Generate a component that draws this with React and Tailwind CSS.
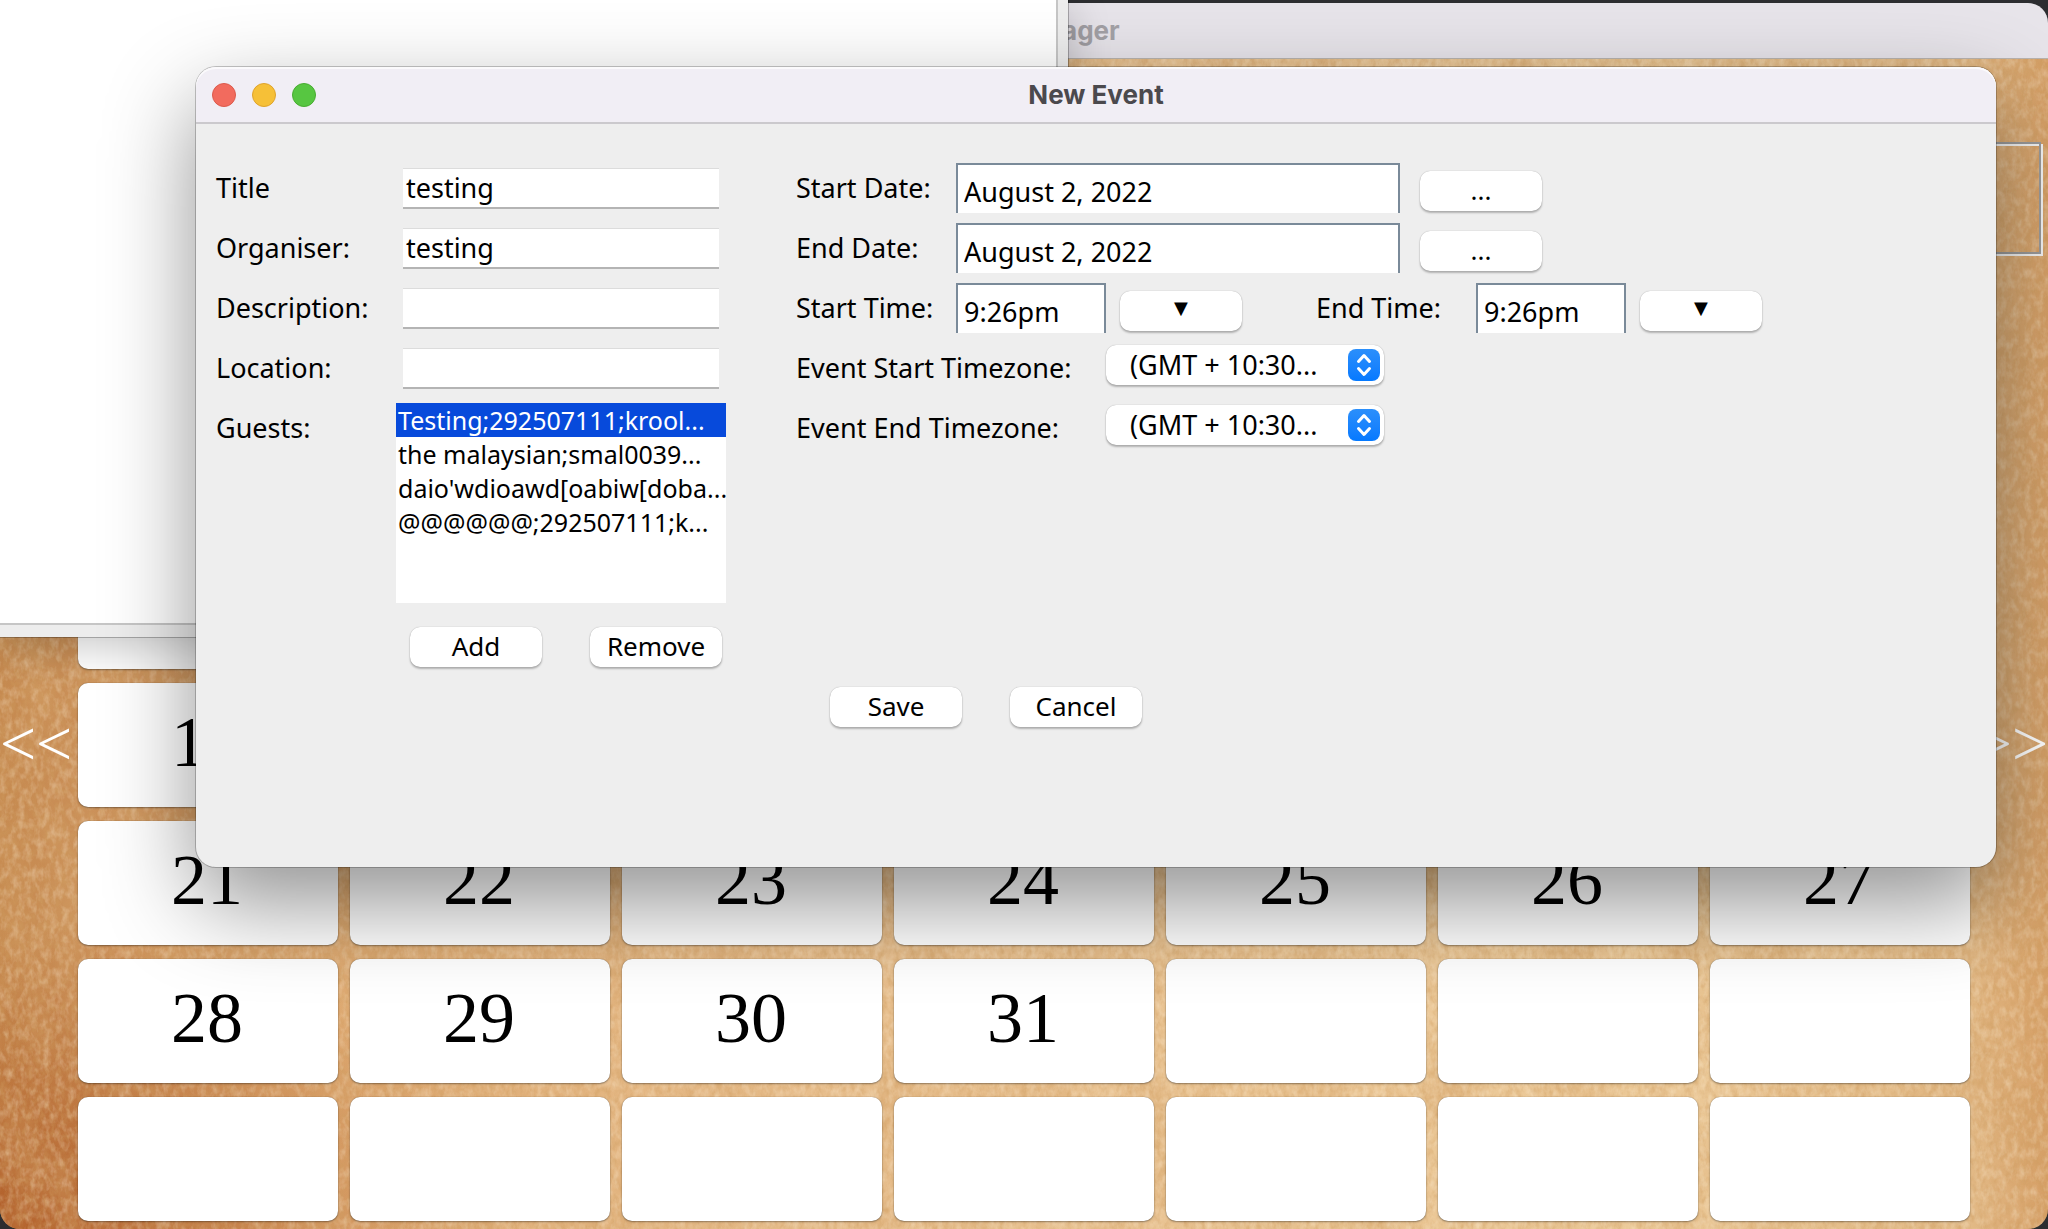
import React from "react";

const FONT = "font-['Noto_Sans','Lucida_Grande',sans-serif]";
const LABEL = "shrink-0 text-[27px] leading-9 text-black";
const BUTTON =
  "flex h-10 shrink-0 items-center justify-center rounded-[10px] bg-white pb-0.5 text-[26px] leading-9 text-black shadow-[0_0_1px_rgba(0,0,0,0.35),0_2px_2px_rgba(0,0,0,0.25)]";
const SWING_FIELD =
  "h-[50px] shrink-0 border-2 border-b-0 border-[#7a8a99] bg-white px-1.5 pt-1 text-[27px] text-black outline-none";

const GUESTS = [
  "Testing;292507111;krool...",
  "the malaysian;smal0039...",
  "daio'wdioawd[oabiw[doba...",
  "@@@@@@;292507111;k...",
];

const BLANK_WEEK = Array(7).fill(null);
const DAYS = [
  ...BLANK_WEEK,
  ...Array.from({ length: 18 }, (_, i) => i + 14),
  null,
  null,
  null,
  ...BLANK_WEEK,
];

function Parchment() {
  return (
    <svg className="absolute inset-0 h-full w-full" aria-hidden="true">
      <defs>
        <linearGradient id="base" x1="0" x2="1" y1="0" y2="0">
          <stop offset="0" stopColor="#c68a50" />
          <stop offset="0.05" stopColor="#cb9059" />
          <stop offset="0.16" stopColor="#deaa72" />
          <stop offset="0.4" stopColor="#e7be8d" />
          <stop offset="0.8" stopColor="#ecca99" />
          <stop offset="0.96" stopColor="#e3bb88" />
          <stop offset="1" stopColor="#d69f66" />
        </linearGradient>
        <radialGradient id="corner" cx="0" cy="1" r="0.26">
          <stop offset="0" stopColor="#a84a17" stopOpacity="0.7" />
          <stop offset="1" stopColor="#b4622b" stopOpacity="0" />
        </radialGradient>
        <filter id="fibre" x="0" y="0" width="100%" height="100%">
          <feTurbulence type="fractalNoise" baseFrequency="0.18 0.11" numOctaves="3" seed="7" />
          <feColorMatrix values="0 0 0 0 0.62  0 0 0 0 0.34  0 0 0 0 0.12  2 0 0 0 -0.8" />
        </filter>
        <filter id="glint" x="0" y="0" width="100%" height="100%">
          <feTurbulence type="fractalNoise" baseFrequency="0.16 0.1" numOctaves="3" seed="21" />
          <feColorMatrix values="0 0 0 0 0.98  0 0 0 0 0.86  0 0 0 0 0.68  0 2 0 0 -0.8" />
        </filter>
        <filter id="blotch" x="0" y="0" width="100%" height="100%">
          <feTurbulence type="fractalNoise" baseFrequency="0.02 0.012" numOctaves="4" seed="4" />
          <feColorMatrix values="0 0 0 0 0.66  0 0 0 0 0.36  0 0 0 0 0.14  2.4 0 0 0 -1" />
        </filter>
      </defs>
      <rect width="100%" height="100%" fill="url(#base)" />
      <rect width="100%" height="100%" fill="url(#corner)" />
      <rect width="100%" height="100%" filter="url(#blotch)" opacity="0.45" />
      <rect width="100%" height="100%" filter="url(#fibre)" opacity="0.5" />
      <rect width="100%" height="100%" filter="url(#glint)" opacity="0.35" />
    </svg>
  );
}

function CalendarWindow() {
  return (
    <section className="absolute inset-x-0 top-[3px] bottom-0 isolate flex flex-col overflow-hidden rounded-[20px]">
      <header className="flex h-14 shrink-0 items-center justify-center border-b border-[#b9b3ae] bg-[#e7e4ea]">
        <h1 className="font-['Inter',sans-serif] text-[26px] leading-8 font-bold text-[#a3a1a6]">Event Manager</h1>
      </header>
      <div className="relative flex min-h-0 flex-1 flex-col">
        <Parchment />
        <div className="relative mx-[7px] mt-[83px] h-28 shrink-0 border-2 border-[#9a9a9a] shadow-[2px_2px_0_#f3f3f3,inset_2px_2px_0_#f3f3f3]" />
        <div className="relative flex flex-1 items-end pb-2">
          <button
            type="button"
            aria-label="Previous month"
            className="h-full w-[78px] shrink-0 pt-3 text-left font-['Liberation_Serif',serif] text-[64px] text-white"
          >
            &lt;&lt;
          </button>
          <div className="grid flex-1 auto-rows-[124px] grid-cols-7 gap-x-3 gap-y-3.5">
            {DAYS.map((day, i) => (
              <button
                key={i}
                type="button"
                aria-label={day ? `Day ${day}` : "Empty day"}
                className="rounded-[10px] bg-white pr-0.5 pb-1.5 text-center font-['Liberation_Serif',serif] text-[72px] leading-[118px] text-black shadow-[0_0_1px_rgba(0,0,0,0.4),0_1px_2px_rgba(0,0,0,0.35)]"
              >
                {day}
              </button>
            ))}
          </div>
          <button
            type="button"
            aria-label="Next month"
            className="flex h-full w-[78px] shrink-0 items-center justify-end pt-3 font-['Liberation_Serif',serif] text-[64px] text-white"
          >
            &gt;&gt;
          </button>
        </div>
      </div>
    </section>
  );
}

function BlankWindow() {
  return (
    <section className="absolute top-0 left-0 h-[637px] w-[1068px] bg-[#ededed] pr-2.5 pb-3 shadow-[0_0_0_1px_rgba(0,0,0,0.25),0_10px_40px_rgba(0,0,0,0.22)]">
      <div className="h-full border-r-2 border-b-2 border-[#c6c6c6] bg-white" />
    </section>
  );
}

function TextRow({ id, label, value }) {
  return (
    <div className="flex h-[60px] items-center">
      <label htmlFor={id} className={`w-[187px] ${LABEL}`}>
        {label}
      </label>
      <input
        id={id}
        type="text"
        defaultValue={value}
        className="h-[41px] w-[316px] border-t border-b-2 border-t-[#dcdcdc] border-b-[#b4b4b4] bg-white px-[3px] text-[27px] text-black outline-none"
      />
    </div>
  );
}

function DateRow({ id, label }) {
  return (
    <div className="flex h-[60px] items-center">
      <label htmlFor={id} className={`w-40 ${LABEL}`}>
        {label}
      </label>
      <input id={id} type="text" defaultValue="August 2, 2022" className={`w-[444px] ${SWING_FIELD}`} />
      <button type="button" aria-label={`Choose ${label}`} className={`mt-1.5 ml-5 w-[122px] ${BUTTON}`}>
        ...
      </button>
    </div>
  );
}

function TimeField({ id, label }) {
  return (
    <div className="flex items-center">
      <label htmlFor={id} className={`w-40 ${LABEL}`}>
        {label}
      </label>
      <input id={id} type="text" defaultValue="9:26pm" className={`w-[150px] ${SWING_FIELD}`} />
      <button type="button" aria-label={`Choose ${label}`} className={`mt-1.5 ml-3.5 w-[122px] ${BUTTON}`}>
        <span className="pb-1 font-['DejaVu_Sans',sans-serif] text-lg">▼</span>
      </button>
    </div>
  );
}

function ZoneRow({ id, label }) {
  return (
    <div className="flex h-[60px] items-center">
      <label htmlFor={id} className={`w-[310px] ${LABEL}`}>
        {label}
      </label>
      <div className="relative mb-1.5">
        <select
          id={id}
          className="block h-10 w-[278px] appearance-none rounded-[10px] bg-white pr-10 pl-6 text-[27px] leading-9 text-black shadow-[0_0_1px_rgba(0,0,0,0.35),0_2px_2px_rgba(0,0,0,0.25)] outline-none"
        >
          <option>(GMT + 10:30...</option>
        </select>
        <span className="pointer-events-none absolute top-1 right-1 flex size-8 items-center justify-center rounded-lg bg-linear-to-b from-[#2b8ffb] to-[#0479ff]">
          <svg viewBox="0 0 32 32" className="size-8" fill="none" stroke="#fff" strokeWidth="3" strokeLinecap="round" strokeLinejoin="round">
            <path d="M10.5 12.500 16 6.500l5.500 6M10.500 19.500 16 25.500l5.500-6" />
          </svg>
        </span>
      </div>
    </div>
  );
}

function NewEventDialog() {
  return (
    <section
      role="dialog"
      aria-labelledby="dialog-title"
      className="absolute top-[67px] right-[52px] left-[196px] rounded-[20px] bg-[#eeeeee] shadow-[0_0_0_1px_rgba(0,0,0,0.22),0_36px_90px_rgba(0,0,0,0.43)]"
    >
      <header className="relative flex h-[57px] items-center justify-center rounded-t-[20px] border-b-2 border-[#cbc9cd] bg-[#f1eef5] shadow-[inset_0_2px_0_#fbfafc]">
        <div className="absolute left-4 flex gap-4">
          <button type="button" aria-label="Close" className="size-6 rounded-full border border-[#dc5a4c] bg-[#f26b5e]" />
          <button type="button" aria-label="Minimise" className="size-6 rounded-full border border-[#dfa32c] bg-[#f6c037]" />
          <button type="button" aria-label="Zoom" className="size-6 rounded-full border border-[#48ac31] bg-[#57c641]" />
        </div>
        <h2 id="dialog-title" className="font-['Inter',sans-serif] text-[26px] leading-8 font-bold text-[#4b494d]">
          New Event
        </h2>
      </header>

      <form className={`pt-[34px] pb-[140px] ${FONT}`} onSubmit={(e) => e.preventDefault()}>
        <div className="flex gap-[70px] pl-5">
          <div className="w-[510px] shrink-0">
            <TextRow id="title" label="Title" value="testing" />
            <TextRow id="organiser" label="Organiser:" value="testing" />
            <TextRow id="description" label="Description:" value="" />
            <TextRow id="location" label="Location:" value="" />
            <div className="flex">
              <span id="guests-label" className={`w-[180px] pt-3 ${LABEL}`}>
                Guests:
              </span>
              <div className="w-[330px]">
                <ul
                  role="listbox"
                  aria-labelledby="guests-label"
                  className="mt-[5px] h-[200px] bg-white text-[25px] leading-[34px] text-black"
                >
                  {GUESTS.map((guest, i) => (
                    <li
                      key={guest}
                      role="option"
                      aria-selected={i === 0}
                      className="h-[34px] px-0.5 whitespace-nowrap aria-selected:bg-[#074adb] aria-selected:text-white"
                    >
                      {guest}
                    </li>
                  ))}
                </ul>
                <div className="mt-6 flex gap-12 pl-3.5">
                  <button type="button" className={`w-[132px] ${BUTTON}`}>Add</button>
                  <button type="button" className={`w-[132px] ${BUTTON}`}>Remove</button>
                </div>
              </div>
            </div>
          </div>

          <div>
            <DateRow id="start-date" label="Start Date:" />
            <DateRow id="end-date" label="End Date:" />
            <div className="flex h-[60px] items-center gap-[74px]">
              <TimeField id="start-time" label="Start Time:" />
              <TimeField id="end-time" label="End Time:" />
            </div>
            <ZoneRow id="start-zone" label="Event Start Timezone:" />
            <ZoneRow id="end-zone" label="Event End Timezone:" />
          </div>
        </div>

        <div className="mt-5 flex gap-12 pl-[634px]">
          <button type="submit" className={`w-[132px] ${BUTTON}`}>Save</button>
          <button type="button" className={`w-[132px] ${BUTTON}`}>Cancel</button>
        </div>
      </form>
    </section>
  );
}

export default function App() {
  return (
    <main className="relative h-screen overflow-hidden bg-[#2c2d30]">
      <CalendarWindow />
      <BlankWindow />
      <NewEventDialog />
    </main>
  );
}
